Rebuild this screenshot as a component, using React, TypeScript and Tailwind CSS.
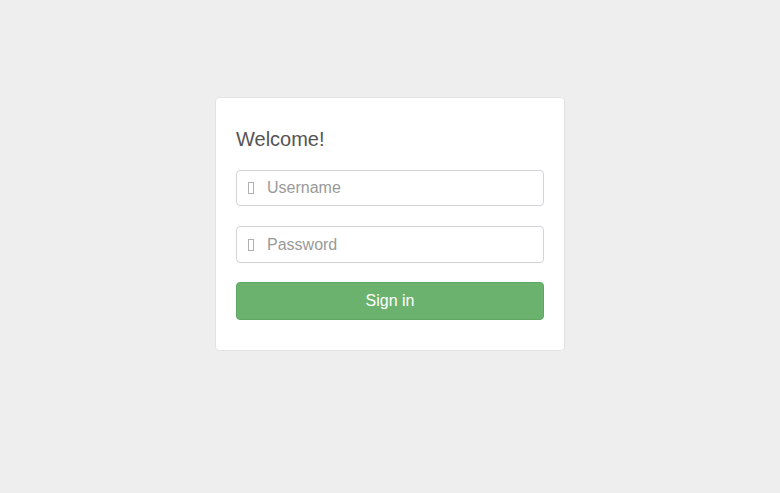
import React from "react";

function Tofu() {
  return (
    <span className="w-[30px] pl-[11px] flex items-center">
      <span className="block w-[6px] h-[12px] border border-[#b0b0b0]" />
    </span>
  );
}

export default function App() {
  return (
    <div
      className="w-full h-[493px] bg-[#eeeeee] flex justify-center pt-[97px]"
      style={{ fontFamily: '"Liberation Sans", Arial, sans-serif' }}
    >
      <div className="w-[350px] h-[254px] bg-white border border-[#e3e3e3] rounded-[4px] px-[20px] pt-[27px]">
        <h1 className="text-[20px] leading-[28px] text-[#555555] font-normal">Welcome!</h1>
        <div className="mt-[17px] flex flex-col">
          <div className="h-[36px] border border-[#d2d3d8] rounded-[4px] flex items-center">
            <Tofu />
            <span className="text-[16px] text-[#999999]">Username</span>
          </div>
          <div className="mt-[20px] h-[37px] border border-[#d2d3d8] rounded-[4px] flex items-center">
            <Tofu />
            <span className="text-[16px] text-[#999999]">Password</span>
          </div>
          <button className="mt-[19px] h-[38px] w-full bg-[#6cb26f] border border-[#5ea862] rounded-[4px] text-white text-[16px]">
            Sign in
          </button>
        </div>
      </div>
    </div>
  );
}
